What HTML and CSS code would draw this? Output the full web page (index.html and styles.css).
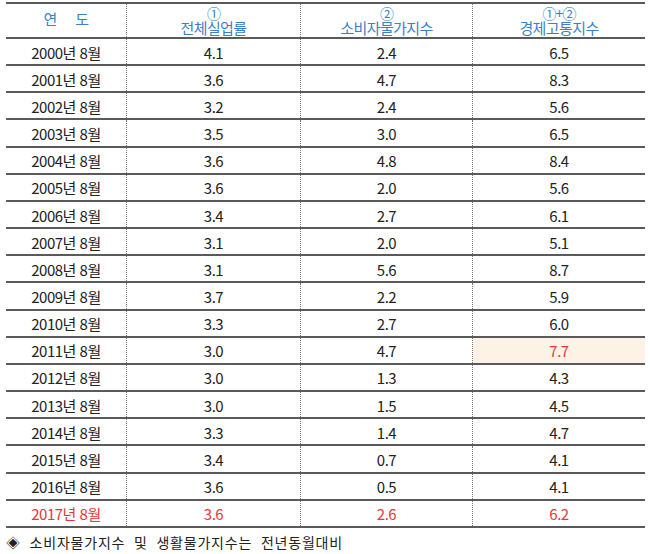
FILE: index.html
```html
<!DOCTYPE html>
<html lang="ko">
<head>
<meta charset="utf-8">
<link rel="stylesheet" href="styles.css">
</head>
<body>
<div class="table">
  <div class="row head">
    <div class="cell"><span class="h-single">연&nbsp;&nbsp;&nbsp;&nbsp;&nbsp;도</span></div>
    <div class="cell"><span class="h-num">①</span><span class="h-txt">전체실업률</span></div>
    <div class="cell"><span class="h-num">②</span><span class="h-txt">소비자물가지수</span></div>
    <div class="cell"><span class="h-num">①+②</span><span class="h-txt">경제고통지수</span></div>
  </div>
  <div class="row"><div class="cell">2000년 8월</div><div class="cell">4.1</div><div class="cell">2.4</div><div class="cell">6.5</div></div>
  <div class="row"><div class="cell">2001년 8월</div><div class="cell">3.6</div><div class="cell">4.7</div><div class="cell">8.3</div></div>
  <div class="row"><div class="cell">2002년 8월</div><div class="cell">3.2</div><div class="cell">2.4</div><div class="cell">5.6</div></div>
  <div class="row"><div class="cell">2003년 8월</div><div class="cell">3.5</div><div class="cell">3.0</div><div class="cell">6.5</div></div>
  <div class="row"><div class="cell">2004년 8월</div><div class="cell">3.6</div><div class="cell">4.8</div><div class="cell">8.4</div></div>
  <div class="row"><div class="cell">2005년 8월</div><div class="cell">3.6</div><div class="cell">2.0</div><div class="cell">5.6</div></div>
  <div class="row"><div class="cell">2006년 8월</div><div class="cell">3.4</div><div class="cell">2.7</div><div class="cell">6.1</div></div>
  <div class="row"><div class="cell">2007년 8월</div><div class="cell">3.1</div><div class="cell">2.0</div><div class="cell">5.1</div></div>
  <div class="row"><div class="cell">2008년 8월</div><div class="cell">3.1</div><div class="cell">5.6</div><div class="cell">8.7</div></div>
  <div class="row"><div class="cell">2009년 8월</div><div class="cell">3.7</div><div class="cell">2.2</div><div class="cell">5.9</div></div>
  <div class="row"><div class="cell">2010년 8월</div><div class="cell">3.3</div><div class="cell">2.7</div><div class="cell">6.0</div></div>
  <div class="row"><div class="cell">2011년 8월</div><div class="cell">3.0</div><div class="cell">4.7</div><div class="cell hl">7.7</div></div>
  <div class="row"><div class="cell">2012년 8월</div><div class="cell">3.0</div><div class="cell">1.3</div><div class="cell">4.3</div></div>
  <div class="row"><div class="cell">2013년 8월</div><div class="cell">3.0</div><div class="cell">1.5</div><div class="cell">4.5</div></div>
  <div class="row"><div class="cell">2014년 8월</div><div class="cell">3.3</div><div class="cell">1.4</div><div class="cell">4.7</div></div>
  <div class="row"><div class="cell">2015년 8월</div><div class="cell">3.4</div><div class="cell">0.7</div><div class="cell">4.1</div></div>
  <div class="row"><div class="cell">2016년 8월</div><div class="cell">3.6</div><div class="cell">0.5</div><div class="cell">4.1</div></div>
  <div class="row red"><div class="cell">2017년 8월</div><div class="cell">3.6</div><div class="cell">2.6</div><div class="cell">6.2</div></div>
</div>
<p class="note">◈ 소비자물가지수 및 생활물가지수는 전년동월대비</p>
</body>
</html>
```

FILE: styles.css
```css
html, body {
  margin: 0;
  padding: 0;
  background: #ffffff;
}
body {
  font-family: "Noto Sans CJK KR", "Noto Sans", sans-serif;
  color: #222222;
}
.table {
  margin: 2px 0 0 6px;
  width: 639px;
  border-top: 2px solid #5a5a5a;
}
.row {
  display: grid;
  grid-template-columns: 121px 174px 172px 172px;
  height: 27.17px;
  box-sizing: border-box;
  border-bottom: 2px solid #5a5a5a;
}
.row.head {
  height: 35px;
}
.cell {
  display: flex;
  align-items: center;
  justify-content: center;
  border-right: 1px dotted #777;
  font-size: 15px;
  letter-spacing: -0.5px;
  line-height: 1;
  padding-top: 1px;
}
.cell:last-child {
  border-right: none;
}
.head .cell {
  flex-direction: column;
  color: #3b80c6;
  padding-top: 0;
}
.h-single {
  font-size: 15px;
  margin-top: -4px;
}
.h-num {
  font-size: 14px;
  line-height: 14px;
  margin-top: 1px;
  letter-spacing: -1px;
}
.h-txt {
  font-size: 15px;
  line-height: 16px;
  letter-spacing: -0.6px;
}
.hl {
  background: #fdf2e6;
  color: #e5383d;
}
.red .cell {
  color: #e5383d;
}
.note {
  margin: 5px 0 0 6px;
  font-size: 14px;
  letter-spacing: 0.8px;
  word-spacing: 4px;
  color: #222;
  line-height: 18px;
}
```
